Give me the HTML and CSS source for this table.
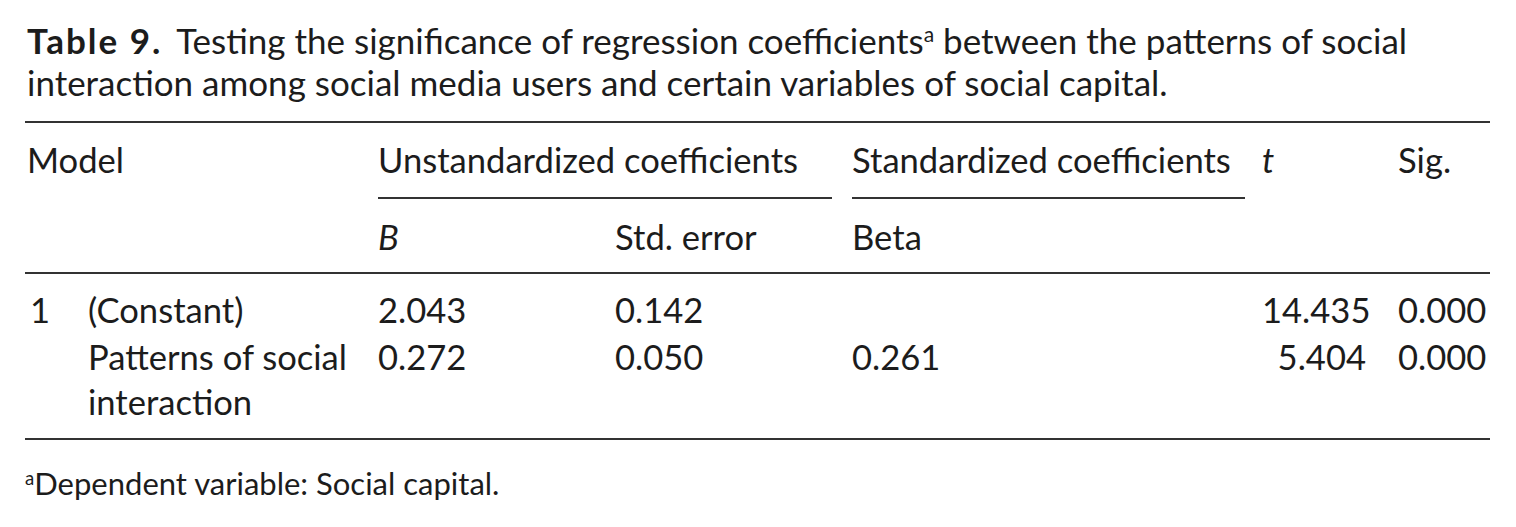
FILE: index.html
```html
<!DOCTYPE html>
<html lang="en">
<head>
<meta charset="utf-8">
<title>Table 9</title>
<link rel="stylesheet" href="styles.css">
</head>
<body>
<div class="page">
  <div class="caption"><span class="label">Table 9.</span> Testing the significance of regression coefficients<sup class="sup">a</sup> between the patterns of social<br>interaction among social media users and certain variables of social capital.</div>
  <div class="table">
    <div class="head">
      <div class="cell c-model">Model</div>
      <div class="cell c-unstd group">Unstandardized coefficients</div>
      <div class="cell c-std group group-std">Standardized coefficients</div>
      <div class="cell c-t"><i>t</i></div>
      <div class="cell c-sig">Sig.</div>
      <div class="cell c-b sub"><i>B</i></div>
      <div class="cell c-se sub">Std. error</div>
      <div class="cell c-beta sub">Beta</div>
    </div>
    <div class="body">
      <div class="row">
        <div class="cell c-num">1</div>
        <div class="cell c-name">(Constant)</div>
        <div class="cell">2.043</div>
        <div class="cell">0.142</div>
        <div class="cell"></div>
        <div class="cell num-r">14.435</div>
        <div class="cell">0.000</div>
      </div>
      <div class="row">
        <div class="cell c-num"></div>
        <div class="cell c-name">Patterns of social interaction</div>
        <div class="cell">0.272</div>
        <div class="cell">0.050</div>
        <div class="cell">0.261</div>
        <div class="cell num-r">5.404</div>
        <div class="cell">0.000</div>
      </div>
    </div>
  </div>
  <p class="note"><sup class="sup">a</sup>Dependent variable: Social capital.</p>
</div>
</body>
</html>
```

FILE: styles.css
```css
html, body {
  margin: 0;
  padding: 0;
  background: #ffffff;
}

body {
  font-family: Lato, "Open Sans", sans-serif;
  font-size: 34.6px;
  color: #1c1c1c;
}

.page {
  width: 1465px;
  margin-left: 25px;
  padding-top: 19px;
}

.caption {
  font-size: 35px;
  line-height: 42px;
  padding-left: 2px;
}

.label {
  font-weight: 700;
  letter-spacing: 2px;
  margin-right: 6px;
}

.sup {
  font-size: 0.6em;
  vertical-align: 0.55em;
  line-height: 0;
}

.table {
  margin-top: 18px;
  border-top: 2px solid #333333;
  border-bottom: 2px solid #333333;
}

.head,
.row {
  display: grid;
  grid-template-columns: 63px 290px 237px 237px 410px 136px 92px;
}

.head {
  border-bottom: 2px solid #333333;
  line-height: 42px;
}

.cell {
  white-space: nowrap;
}

.head .c-model {
  grid-column: 1 / 3;
  grid-row: 1;
  padding-left: 2px;
  padding-top: 16px;
}

.head .c-unstd {
  grid-column: 3 / 5;
  grid-row: 1;
}

.head .c-std {
  grid-column: 5 / 6;
  grid-row: 1;
}

.head .c-t {
  grid-column: 6 / 7;
  grid-row: 1;
  padding-top: 16px;
}

.head .c-sig {
  grid-column: 7 / 8;
  grid-row: 1;
  padding-top: 16px;
}

.group {
  padding-top: 16px;
  padding-bottom: 16px;
  border-bottom: 2px solid #333333;
  margin-right: 20px;
}

.group-std {
  margin-right: 17px;
}

.sub {
  grid-row: 2;
  padding-top: 17px;
  padding-bottom: 14px;
}

.head .c-b { grid-column: 3 / 4; }
.head .c-se { grid-column: 4 / 5; }
.head .c-beta { grid-column: 5 / 6; }

.body {
  padding-top: 13px;
  padding-bottom: 14px;
}

.row {
  line-height: 45px;
}

.row + .row {
  margin-top: 2px;
}

.row .c-num {
  padding-left: 5px;
}

.row .c-name {
  white-space: normal;
  padding-right: 20px;
}

.num-r {
  text-align: right;
  padding-right: 32px;
}

.note {
  margin: 0;
  padding-top: 22px;
  font-size: 31px;
  line-height: 42px;
}
```
